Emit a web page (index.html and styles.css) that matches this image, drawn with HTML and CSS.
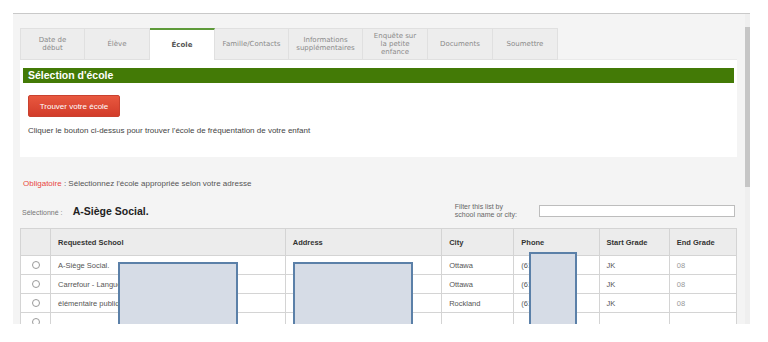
FILE: index.html
```html
<html>
	<head>
		<title>Sélection d'école</title>
		<link rel="stylesheet" href="styles.css">
	</head>

	<body>
		<div id="div_frame">
			<div id="div_page">
				<div class="tabs">
					<div class="tab">Date de<br>début</div>
					<div class="tab">Élève</div>
					<div class="tab tab_active">École</div>
					<div class="tab tab_wide">Famille/Contacts</div>
					<div class="tab tab_wide">Informations<br>supplémentaires</div>
					<div class="tab">Enquête sur<br>la petite<br>enfance</div>
					<div class="tab">Documents</div>
					<div class="tab">Soumettre</div>
				</div>

				<div class="panel">
					<div class="panel_title">Sélection d'école</div>
					<button class="bt_trouver">Trouver votre école</button>
					<p class="hint">Cliquer le bouton ci-dessus pour trouver l'école de fréquentation de votre enfant</p>
				</div>

				<p class="required"><span class="req">Obligatoire</span> : Sélectionnez l'école appropriée selon votre adresse</p>

				<div class="selected_row">
					<div class="selected">
						<span class="sel_label">Sélectionné :</span>
						<span class="sel_name">A-Siège Social.</span>
					</div>
					<div class="filter">
						<span class="filter_label">Filter this list by<br>school name or city:</span>
						<input type="text" class="filter_input">
					</div>
				</div>

				<table class="schools">
					<tr>
						<th class="c_radio"></th>
						<th class="c_school">Requested School</th>
						<th class="c_address">Address</th>
						<th class="c_city">City</th>
						<th class="c_phone">Phone</th>
						<th class="c_start">Start Grade</th>
						<th class="c_end">End Grade</th>
					</tr>
					<tr>
						<td class="c_radio"><span class="radio"></span></td>
						<td>A-Siège Social.</td>
						<td></td>
						<td>Ottawa</td>
						<td>(613)</td>
						<td>JK</td>
						<td class="grade">08</td>
					</tr>
					<tr>
						<td class="c_radio"><span class="radio"></span></td>
						<td>Carrefour - Langue</td>
						<td></td>
						<td>Ottawa</td>
						<td>(613)</td>
						<td>JK</td>
						<td class="grade">08</td>
					</tr>
					<tr>
						<td class="c_radio"><span class="radio"></span></td>
						<td>élémentaire publique</td>
						<td></td>
						<td>Rockland</td>
						<td>(613)</td>
						<td>JK</td>
						<td class="grade">08</td>
					</tr>
					<tr>
						<td class="c_radio"><span class="radio"></span></td>
						<td></td>
						<td></td>
						<td></td>
						<td></td>
						<td></td>
						<td></td>
					</tr>
				</table>

				<!-- zones masquées -->
				<div class="mask mask_school"></div>
				<div class="mask mask_address"></div>
				<div class="mask mask_phone"></div>
			</div>
			<div class="scrollbar"><div class="thumb"></div></div>
		</div>
	</body>
</html>
```

FILE: styles.css
```css
body {
	margin: 0;
	background-color: #FFFFFF;
	font-family: "Liberation Sans", Arial, sans-serif;
	font-size: 8px;
	color: #444;
}

#div_frame {
	display: flex;
	margin-top: 13px;
	margin-left: 13px;
	width: 737px;
	height: 310px;
	border-top: 1px solid #C9C9C9;
	background-color: #F4F4F4;
}

#div_page {
	position: relative;
	overflow: hidden;
	width: 717px;
	padding: 14px 8px 0 7px;
}

.scrollbar {
	width: 5px;
	background-color: #EFEFEF;
	padding-top: 13px;
}

.thumb {
	height: 160px;
	background-color: #C6C6C6;
}

/* onglets */
.tabs {
	display: flex;
	height: 32px;
	border-bottom: 1px solid #EAEAEA;
	box-sizing: border-box;
}

.tab {
	display: flex;
	align-items: center;
	justify-content: center;
	width: 65px;
	height: 32px;
	box-sizing: border-box;
	border: 1px solid #E0E0E0;
	border-left: none;
	background-color: #EDEDED;
	font-family: "DejaVu Sans", Verdana, sans-serif;
	font-size: 7px;
	line-height: 8px;
	color: #8A8A8A;
	text-align: center;
}

.tab:first-child {
	border-left: 1px solid #E0E0E0;
}

.tab_wide {
	width: 74px;
}

.tab_active {
	background-color: #FFFFFF;
	border-top: 2px solid #5E9A3A;
	border-bottom: none;
	font-weight: bold;
	color: #555;
}

/* panneau */
.panel {
	height: 97px;
	box-sizing: border-box;
	padding: 8px 3px 0 3px;
	background-color: #FFFFFF;
}

.panel_title {
	height: 15px;
	padding-left: 5px;
	background-color: #437A06;
	color: #FFFFFF;
	font-size: 10.5px;
	font-weight: bold;
	line-height: 15px;
}

.bt_trouver {
	display: block;
	margin: 12px 0 0 5px;
	width: 92px;
	height: 22px;
	border: 1px solid #C9412F;
	border-radius: 2px;
	background: linear-gradient(#E8583F, #D23C2A);
	color: #FFFFFF;
	font-family: "Liberation Sans", Arial, sans-serif;
	font-size: 8px;
	padding: 0;
}

.hint {
	margin: 9px 0 0 5px;
	line-height: 10px;
	color: #444;
}

.required {
	margin: 22px 0 0 3px;
	line-height: 10px;
	color: #555;
}

.req {
	color: #E8473F;
}

.selected_row {
	display: flex;
	justify-content: space-between;
	align-items: center;
	height: 22px;
	margin-top: 11px;
}

.selected {
	padding-left: 2px;
}

.sel_label {
	font-size: 7px;
	color: #777;
}

.sel_name {
	margin-left: 8px;
	font-size: 10.5px;
	font-weight: bold;
	color: #222;
}

.filter {
	display: flex;
	align-items: center;
	gap: 22px;
	padding-right: 2px;
}

.filter_label {
	font-size: 7px;
	line-height: 8px;
	color: #666;
}

.filter_input {
	width: 196px;
	height: 12px;
	box-sizing: border-box;
	border: 1px solid #BDBDBD;
	background-color: #FFFFFF;
	margin: 0;
}

/* liste des écoles */
.schools {
	margin-top: 6px;
	width: 717px;
	border-collapse: collapse;
	background-color: #FFFFFF;
	font-size: 7.5px;
	table-layout: fixed;
}

.schools th, .schools td {
	border: 1px solid #D4D4D4;
	padding: 0 0 0 7px;
	text-align: left;
	white-space: nowrap;
	overflow: hidden;
}

.schools th {
	height: 27px;
	background-color: #ECECEC;
	font-weight: bold;
	color: #333;
}

.schools td {
	height: 19px;
	color: #555;
}

.schools .grade {
	color: #999;
}

.c_radio { width: 22px; }
.c_school { width: 226px; }
.c_address { width: 148px; }
.c_city { width: 64px; }
.c_phone { width: 77px; }
.c_start { width: 62px; }
.c_end { width: 59px; }

.schools td.c_radio {
	padding: 0;
	text-align: center;
}

.radio {
	display: inline-block;
	width: 6px;
	height: 6px;
	border: 1px solid #9A9A9A;
	border-radius: 50%;
	vertical-align: middle;
}

.mask {
	position: absolute;
	box-sizing: border-box;
	border: 2px solid #5B80A8;
	background-color: #D6DCE6;
	height: 100px;
}

.mask_school {
	left: 105px;
	top: 248px;
	width: 120px;
}

.mask_address {
	left: 280px;
	top: 248px;
	width: 120px;
}

.mask_phone {
	left: 516px;
	top: 238px;
	width: 48px;
}
```
